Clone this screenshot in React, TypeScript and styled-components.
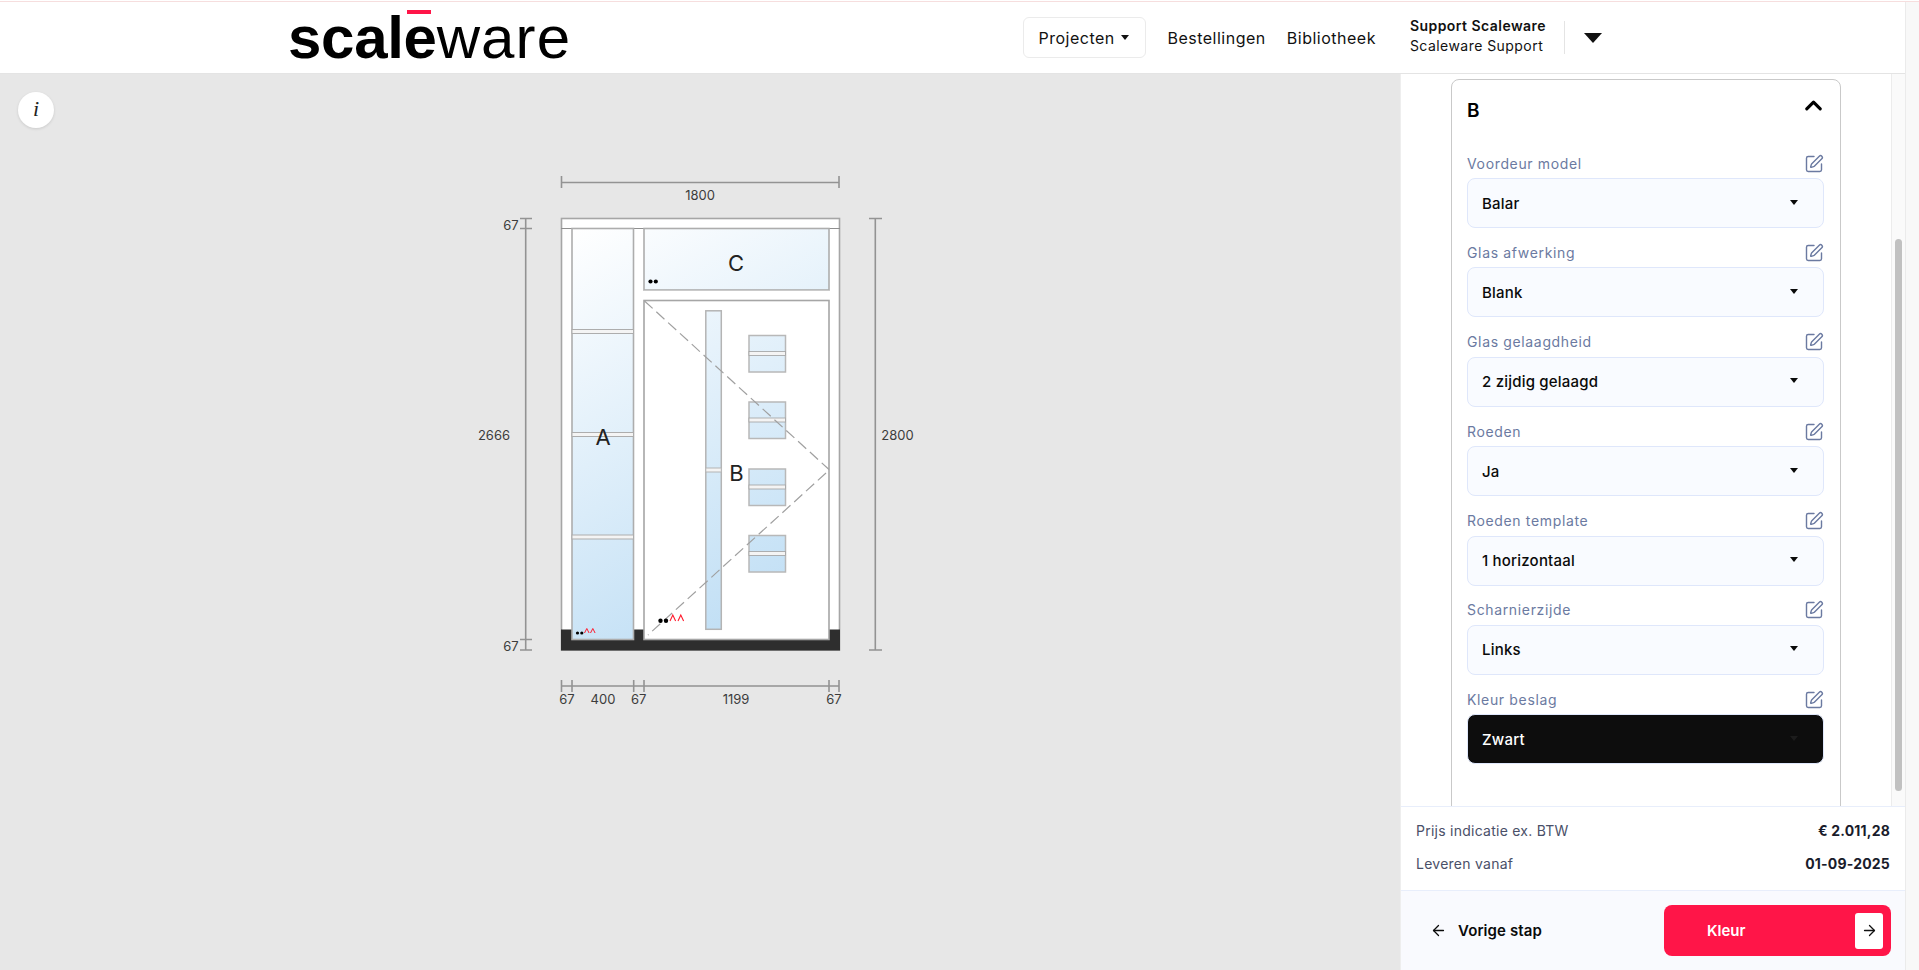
import React from "react";
import styled, { createGlobalStyle } from "styled-components";
import { ArrowLeft, ArrowRight, ChevronUp, SquarePen } from "lucide-react";

const GlobalStyle = createGlobalStyle`
    html, body {
        margin: 0;
        padding: 0;
        height: 100%;
        overflow: hidden;
        background: #fff;
        font-family: "Inter", "Liberation Sans", sans-serif;
    }
`;

const fields = [
    { label: "Voordeur model", value: "Balar" },
    { label: "Glas afwerking", value: "Blank" },
    { label: "Glas gelaagdheid", value: "2 zijdig gelaagd" },
    { label: "Roeden", value: "Ja" },
    { label: "Roeden template", value: "1 horizontaal" },
    { label: "Scharnierzijde", value: "Links" },
    { label: "Kleur beslag", value: "Zwart", dark: true },
];

const Drawing = () => (
    <svg width="480" height="560" viewBox="460 160 480 560" fontFamily="Inter, sans-serif" style={{ display: "block" }}>
        <defs>
            <linearGradient id="glass" gradientUnits="userSpaceOnUse" x1="572" y1="228" x2="800" y2="640">
                <stop offset="0" stopColor="#ffffff" />
                <stop offset="1" stopColor="#bbdcf4" />
            </linearGradient>
        </defs>

        {/* frame */}
        <rect x="561.5" y="218.5" width="278" height="431.5" fill="#fff" stroke="#a6a6a6" strokeWidth="1.6" />
        <rect x="561" y="629.5" width="279" height="21" fill="#2e2e2e" />
        <line x1="561" y1="228.5" x2="840" y2="228.5" stroke="#8f8f8f" strokeWidth="1" />

        {/* side light A */}
        <rect x="572" y="228.5" width="61.5" height="411" fill="url(#glass)" stroke="#adadad" strokeWidth="1.6" />
        {[331.5, 434.5, 537].map((y) => (
            <rect key={y} x="572" y={y - 2} width="61.5" height="4" fill="#f4f4f4" stroke="#adadad" strokeWidth="1" />
        ))}

        {/* top light C */}
        <rect x="644" y="228.5" width="185" height="61.5" fill="url(#glass)" stroke="#adadad" strokeWidth="1.6" />
        <rect x="644" y="290.8" width="185" height="9.5" fill="#fff" />

        {/* door B */}
        <rect x="644" y="300.5" width="185" height="339" fill="#fff" stroke="#a6a6a6" strokeWidth="1.6" />
        <rect x="705.8" y="310.8" width="15.5" height="318.5" fill="url(#glass)" stroke="#b4b4b4" strokeWidth="1.5" />
        <rect x="705.8" y="468" width="15.5" height="4" fill="#f4f4f4" stroke="#b4b4b4" strokeWidth="1" />
        {[353.5, 420, 487, 553.5].map((y) => (
            <g key={y}>
                <rect x="749" y={y - 18} width="36.5" height="36.5" fill="url(#glass)" stroke="#b8b8b8" strokeWidth="1.5" />
                <rect x="749" y={y - 2} width="36.5" height="4" fill="#f4f4f4" stroke="#a0a0a0" strokeWidth="0.8" />
            </g>
        ))}
        <path d="M644.5 301 L829 469.5 M826 473 L648 635" fill="none" stroke="#a0a0a0" strokeWidth="1.2" strokeDasharray="11 5" />

        {/* hinge marks */}
        <circle cx="650.5" cy="281.5" r="2.1" fill="#000" />
        <circle cx="655.8" cy="281.5" r="2.1" fill="#000" />
        <circle cx="577.5" cy="633" r="1.6" fill="#000" />
        <circle cx="581.8" cy="633" r="1.6" fill="#000" />
        <path d="M584.5 633 L586.8 628.5 L589.1 633 M590.5 633 L592.8 628.5 L595.1 633" fill="none" stroke="#ff1a2c" strokeWidth="1" />
        <circle cx="660.5" cy="620.8" r="2.2" fill="#000" />
        <circle cx="666" cy="620.8" r="2.2" fill="#000" />
        <path d="M670 621 L672.8 615 L675.6 621 M678 621 L680.8 615 L683.6 621" fill="none" stroke="#ff1a2c" strokeWidth="1.1" />

        <g fontSize="22" fill="#222" textAnchor="middle">
            <text x="603" y="445">A</text>
            <text x="736" y="270.5">C</text>
            <text x="736.5" y="481">B</text>
        </g>

        {/* dimensions */}
        <g stroke="#939393" strokeWidth="1.6" fill="none">
            <path d="M561.5 176 V188 M561.5 182.5 H839 M839 176 V188" />
            <path d="M525.7 218 V650 M520 218.5 H532 M520 228.5 H532 M520 639.5 H532 M520 650 H532" />
            <path d="M875.3 218 V650 M869 218.5 H882 M869 650 H882" />
            <path d="M561.5 680 V692 M572 680 V692 M633.7 680 V692 M644 680 V692 M829 680 V692 M839 680 V692 M561.5 686 H839" />
        </g>
        <g fontSize="13" fill="#3c3c3c" textAnchor="middle">
            <text x="700" y="200">1800</text>
            <text x="511" y="230">67</text>
            <text x="494" y="440">2666</text>
            <text x="511" y="650.5">67</text>
            <text x="897.5" y="440">2800</text>
            <text x="567" y="704">67</text>
            <text x="603" y="704">400</text>
            <text x="638.7" y="704">67</text>
            <text x="736" y="704">1199</text>
            <text x="834" y="704">67</text>
        </g>
    </svg>
);

const App = () => {
    return (
        <>
            <GlobalStyle />
            <Page>
                <PinkLine />
                <Window>
                    <Main>
                        <Header>
                            <Logo>
                                <strong>scale</strong>ware
                                <LogoBar />
                            </Logo>
                            <Nav>
                                <ProjectsButton>
                                    Projecten <SmallCaret />
                                </ProjectsButton>
                                <NavLink>Bestellingen</NavLink>
                                <NavLink>Bibliotheek</NavLink>
                                <User>
                                    <UserName>Support Scaleware</UserName>
                                    <UserRole>Scaleware Support</UserRole>
                                </User>
                                <UserCaret />
                            </Nav>
                        </Header>
                        <Body>
                            <Canvas>
                                <InfoButton>i</InfoButton>
                                <Drawing />
                            </Canvas>
                            <Sidebar>
                                <ScrollArea>
                                    <ScrollContent>
                                        <Card>
                                            <CardHead>
                                                <CardTitle>B</CardTitle>
                                                <ChevronUp size={27} strokeWidth={2.8} color="#000" />
                                            </CardHead>
                                            <FieldList>
                                                {fields.map((f) => (
                                                    <div key={f.label}>
                                                        <LabelRow>
                                                            <Label>{f.label}</Label>
                                                            <SquarePen size={20} strokeWidth={1.7} color="#6b7aa1" />
                                                        </LabelRow>
                                                        <Select $dark={f.dark}>
                                                            {f.value}
                                                            <SelectCaret $dark={f.dark} />
                                                        </Select>
                                                    </div>
                                                ))}
                                            </FieldList>
                                        </Card>
                                    </ScrollContent>
                                    <ScrollTrack>
                                        <ScrollThumb />
                                    </ScrollTrack>
                                </ScrollArea>
                                <Summary>
                                    <SummaryRow>
                                        <span>Prijs indicatie ex. BTW</span>
                                        <strong>€ 2.011,28</strong>
                                    </SummaryRow>
                                    <SummaryRow>
                                        <span>Leveren vanaf</span>
                                        <strong>01-09-2025</strong>
                                    </SummaryRow>
                                </Summary>
                                <Actions>
                                    <BackLink>
                                        <ArrowLeft size={17} strokeWidth={1.8} />
                                        Vorige stap
                                    </BackLink>
                                    <NextButton>
                                        Kleur
                                        <NextIcon>
                                            <ArrowRight size={17} strokeWidth={1.8} />
                                        </NextIcon>
                                    </NextButton>
                                </Actions>
                            </Sidebar>
                        </Body>
                    </Main>
                    <PageScroll />
                </Window>
            </Page>
        </>
    );
};

export default App;

const Page = styled.div`
    display: flex;
    flex-direction: column;
    width: 1919px;
    height: 970px;
    overflow: hidden;
`;

const PinkLine = styled.div`
    height: 1px;
    border-top: 1px solid #fff;
    background: #f6dede;
`;

const Window = styled.div`
    flex: 1;
    display: flex;
    min-height: 0;
`;

const Main = styled.div`
    flex: 1;
    display: flex;
    flex-direction: column;
    min-width: 0;
`;

const PageScroll = styled.div`
    width: 13px;
    background: #f8f8f8;
    border-left: 1px solid #ebebeb;
`;

const Header = styled.header`
    display: flex;
    align-items: center;
    height: 71px;
    padding: 0 303px 0 288px;
    background: #fff;
    border-bottom: 1px solid #e4e4e4;
`;

const Logo = styled.div`
    position: relative;
    font-family: "Liberation Sans", sans-serif;
    font-size: 60px;
    line-height: 60px;
    letter-spacing: 1.1px;
    color: #000;
    font-weight: 400;

    strong {
        font-weight: 700;
        letter-spacing: -0.3px;
    }
`;

const LogoBar = styled.span`
    position: absolute;
    left: 119px;
    top: 2px;
    width: 24px;
    height: 4px;
    background: #ff1548;
`;

const Nav = styled.nav`
    display: flex;
    align-items: center;
    margin-left: auto;
    font-size: 16px;
    color: #111;
`;

const ProjectsButton = styled.button`
    display: flex;
    align-items: center;
    gap: 6px;
    width: 123px;
    height: 41px;
    padding: 0 14px;
    background: #fff;
    border: 1px solid #ebebeb;
    border-radius: 6px;
    font: inherit;
    letter-spacing: 0.5px;
    color: inherit;
`;

const SmallCaret = styled.span`
    width: 0;
    height: 0;
    border-left: 4.5px solid transparent;
    border-right: 4.5px solid transparent;
    border-top: 5px solid #111;
`;

const NavLink = styled.a`
    margin-left: 21px;
    letter-spacing: 0.5px;
`;

const User = styled.div`
    display: flex;
    flex-direction: column;
    gap: 5.5px;
    height: 33px;
    margin-left: 34px;
    padding-right: 18px;
    border-right: 1px solid #e4e4e4;
    font-size: 14px;
    letter-spacing: 0.45px;
    white-space: nowrap;
`;

const UserName = styled.div`
    margin-top: -2px;
    font-weight: 600;
    line-height: 14px;
`;

const UserRole = styled.div`
    line-height: 14px;
`;

const UserCaret = styled.span`
    margin-left: 19px;
    width: 0;
    height: 0;
    border-left: 9px solid transparent;
    border-right: 9px solid transparent;
    border-top: 10px solid #111;
`;

const Body = styled.div`
    flex: 1;
    display: flex;
    min-height: 0;
`;

const Canvas = styled.div`
    position: relative;
    flex: 1;
    padding: 86px 0 0 460px;
    background: #e7e7e7;
`;

const InfoButton = styled.div`
    position: absolute;
    left: 18px;
    top: 18px;
    display: flex;
    align-items: center;
    justify-content: center;
    width: 36px;
    height: 36px;
    padding-bottom: 2px;
    box-sizing: border-box;
    border-radius: 50%;
    background: #fff;
    box-shadow: 0 1px 3px rgba(0, 0, 0, 0.12);
    font-family: "Liberation Serif", serif;
    font-style: italic;
    font-size: 22px;
    color: #222;
`;

const Sidebar = styled.aside`
    display: flex;
    flex-direction: column;
    width: 504px;
    background: #fff;
    border-left: 1px solid #eee;
`;

const ScrollArea = styled.div`
    flex: 1;
    display: flex;
    min-height: 0;
    overflow: hidden;
`;

const ScrollContent = styled.div`
    flex: 1;
    padding: 5px 50px 0;
`;

const Card = styled.div`
    height: 900px;
    border: 1px solid #c9c9c9;
    border-radius: 8px;
    padding: 0 15px;
`;

const CardHead = styled.div`
    display: flex;
    align-items: center;
    justify-content: space-between;
    height: 61px;
    margin-bottom: 10px;
    svg {
        margin-top: -11px;
        margin-right: -2px;
    }
`;

const CardTitle = styled.div`
    font-size: 19px;
    font-weight: 600;
    color: #000;
`;

const FieldList = styled.div`
    display: flex;
    flex-direction: column;
    gap: 12.4px;
`;

const LabelRow = styled.div`
    display: flex;
    align-items: center;
    justify-content: space-between;
    height: 27px;
    padding-bottom: 2px;
    box-sizing: border-box;
    svg {
        margin-right: 1px;
    }
`;

const Label = styled.div`
    margin-bottom: 1px;
    font-size: 14px;
    letter-spacing: 0.65px;
    color: #6b7aa1;
`;

const Select = styled.div<{ $dark?: boolean }>`
    display: flex;
    align-items: center;
    justify-content: space-between;
    box-sizing: border-box;
    height: 50px;
    margin-right: 1px;
    padding: 0 25px 0 14px;
    background: ${(p) => (p.$dark ? "#0d0d0d" : "#f9fbff")};
    border: 1px solid #dfe7fb;
    border-radius: 8px;
    font-size: 15px;
    font-weight: 500;
    letter-spacing: 0.2px;
    color: ${(p) => (p.$dark ? "#fff" : "#0a0a0a")};
`;

const SelectCaret = styled.span<{ $dark?: boolean }>`
    width: 0;
    height: 0;
    margin-top: -2px;
    border-left: 4.5px solid transparent;
    border-right: 4.5px solid transparent;
    border-top: 5px solid ${(p) => (p.$dark ? "#1c1c1c" : "#0a0a0a")};
`;

const ScrollTrack = styled.div`
    width: 14px;
    padding: 165px 3px 0;
    box-sizing: border-box;
    background: #fafafa;
    border-left: 1px solid #ececec;
`;

const ScrollThumb = styled.div`
    height: 552px;
    border-radius: 4px;
    background: #c1c1c1;
`;

const Summary = styled.div`
    display: flex;
    flex-direction: column;
    justify-content: center;
    gap: 11px;
    height: 85px;
    padding: 0 15px 3px;
    box-sizing: border-box;
    border-top: 1px solid #e8eefb;
    border-bottom: 1px solid #e8eefb;
`;

const SummaryRow = styled.div`
    display: flex;
    align-items: center;
    justify-content: space-between;
    height: 22px;
    font-size: 14px;
    letter-spacing: 0.25px;
    color: #4a5068;

    strong {
        font-weight: 700;
        letter-spacing: 0.2px;
        color: #191c2b;
    }
`;

const Actions = styled.div`
    display: flex;
    align-items: center;
    justify-content: space-between;
    height: 79px;
    padding: 0 14px 0 29px;
    box-sizing: border-box;
    background: #f9fafe;
`;

const BackLink = styled.div`
    display: flex;
    align-items: center;
    gap: 11px;
    font-size: 15px;
    font-weight: 600;
    letter-spacing: 0.1px;
    color: #0a0a0a;
`;

const NextButton = styled.div`
    display: flex;
    align-items: center;
    justify-content: space-between;
    box-sizing: border-box;
    width: 227px;
    height: 51px;
    padding: 0 8px 0 43px;
    border-radius: 8px;
    background: #ff1548;
    font-size: 15px;
    font-weight: 600;
    color: #fff;
`;

const NextIcon = styled.div`
    display: flex;
    align-items: center;
    justify-content: center;
    width: 28px;
    height: 36px;
    border-radius: 3px;
    background: #fff;
    color: #111;
`;
